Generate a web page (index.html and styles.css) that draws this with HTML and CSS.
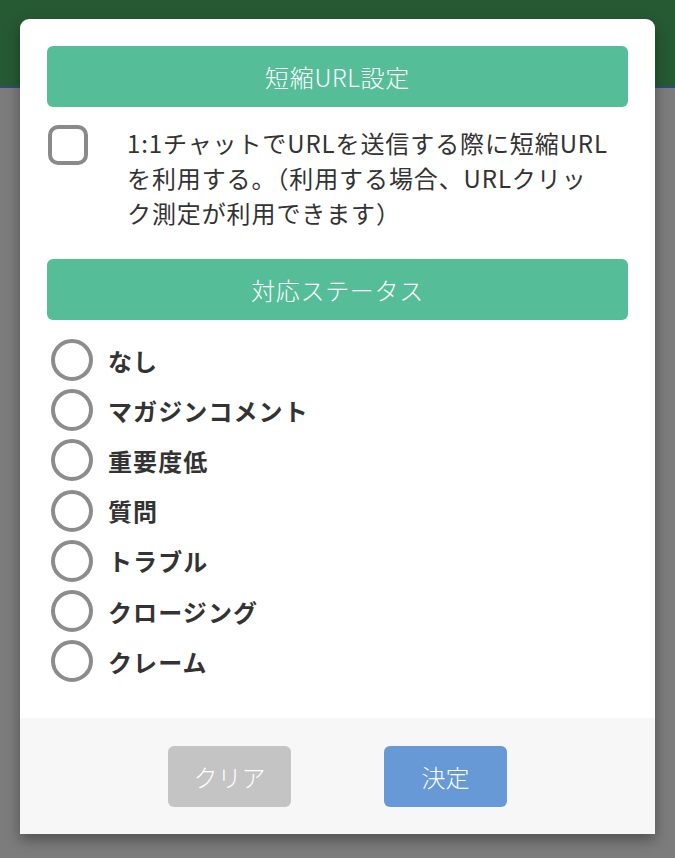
FILE: index.html
```html
<!DOCTYPE html>
<html lang="ja">
<head>
<meta charset="utf-8">
<link rel="stylesheet" href="styles.css">
</head>
<body>
<div class="topbar"></div>
<div class="backdrop"></div>
<div class="modal">
  <div class="modal-body">
    <div class="section-title">短縮URL設定</div>
    <label class="check-row">
      <span class="checkbox"></span>
      <span class="check-text">1:1チャットでURLを送信する際に短縮URL<br>を利用する。（利用する場合、URLクリッ<br>ク測定が利用できます）</span>
    </label>
    <div class="section-title">対応ステータス</div>
    <ul class="radio-list">
      <li class="radio-row"><span class="radio"></span><span class="radio-label">なし</span></li>
      <li class="radio-row"><span class="radio"></span><span class="radio-label">マガジンコメント</span></li>
      <li class="radio-row"><span class="radio"></span><span class="radio-label">重要度低</span></li>
      <li class="radio-row"><span class="radio"></span><span class="radio-label">質問</span></li>
      <li class="radio-row"><span class="radio"></span><span class="radio-label">トラブル</span></li>
      <li class="radio-row"><span class="radio"></span><span class="radio-label">クロージング</span></li>
      <li class="radio-row"><span class="radio"></span><span class="radio-label">クレーム</span></li>
    </ul>
  </div>
  <div class="modal-footer">
    <button class="btn btn-clear">クリア</button>
    <button class="btn btn-ok">決定</button>
  </div>
</div>
</body>
</html>
```

FILE: styles.css
```css
* { box-sizing: border-box; }
html, body { margin: 0; padding: 0; }
body {
  width: 675px;
  height: 858px;
  overflow: hidden;
  background: #7b7c7b;
  font-family: "Noto Sans CJK JP", "Noto Sans", sans-serif;
  position: relative;
}
.topbar {
  height: 88px;
  background: #265a33;
  border-bottom: 2px solid #2f4c78;
}
.backdrop { height: 770px; }
.modal {
  position: absolute;
  left: 20px;
  top: 19px;
  width: 635px;
  height: 815px;
  background: #fff;
  border-radius: 9px 9px 0 0;
  box-shadow: 0 6px 14px rgba(0,0,0,0.35);
  display: flex;
  flex-direction: column;
  overflow: hidden;
}
.modal-body {
  flex: 1;
  padding: 27px 27px 0 27px;
}
.section-title {
  height: 61px;
  line-height: 61px;
  background: #55bd98;
  border-radius: 6px;
  color: #fff;
  text-align: center;
  font-size: 24px;
  font-weight: 300;
  letter-spacing: 0.7px;
}
.check-row {
  display: flex;
  align-items: flex-start;
  padding: 18px 0 29px 1px;
}
.checkbox {
  flex: none;
  width: 40px;
  height: 40px;
  border: 4px solid #8a8a8a;
  border-radius: 10px;
}
.check-text {
  margin-left: 39px;
  font-size: 24px;
  line-height: 35px;
  color: #333;
  white-space: nowrap;
  letter-spacing: 0.9px;
}
.radio-list {
  list-style: none;
  margin: 0;
  padding: 15px 0 0 4px;
}
.radio-row {
  display: flex;
  align-items: center;
  height: 50.2px;
}
.radio {
  flex: none;
  width: 42px;
  height: 42px;
  border: 4px solid #8c8c8c;
  border-radius: 50%;
}
.radio-label {
  margin-left: 15px;
  font-size: 24px;
  font-weight: 700;
  color: #333;
  letter-spacing: 1.1px;
}
.modal-footer {
  flex: none;
  height: 116px;
  background: #f7f7f7;
  display: flex;
  justify-content: center;
  align-items: flex-start;
  padding-top: 28px;
  gap: 93px;
}
.btn {
  width: 123px;
  height: 61px;
  border: none;
  border-radius: 6px;
  color: #fff;
  font-family: "Noto Sans CJK JP", "Noto Sans", sans-serif;
  font-size: 24px;
  font-weight: 300;
  padding: 0;
}
.btn-clear { background: #c4c4c4; }
.btn-ok { background: #6699d6; }
```
